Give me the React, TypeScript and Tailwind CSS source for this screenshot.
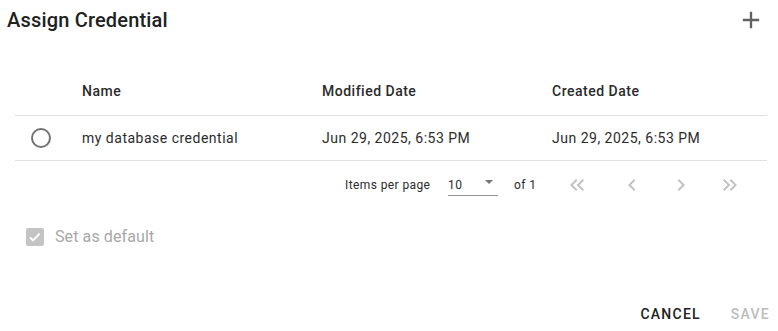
import React from "react";

const rows = [
  {
    name: "my database credential",
    modified: "Jun 29, 2025, 6:53 PM",
    created: "Jun 29, 2025, 6:53 PM",
  },
];

const Icon = ({ d, className }: { d: string; className?: string }) => (
  <svg viewBox="0 0 24 24" className={className} fill="currentColor">
    <path d={d} />
  </svg>
);

const App = () => {
  return (
    <div className="w-[778px] h-[331px] bg-white font-['Roboto',sans-serif] text-[#212121] overflow-hidden">
      {/* title */}
      <div className="flex justify-between items-start h-[67px] pl-[7px] pt-[4px]">
        <h2 className="text-[20px] leading-[32px] font-medium tracking-[0.18px]">Assign Credential</h2>
        <Icon
          d="M19 13h-6v6h-2v-6H5v-2h6V5h2v6h6v2z"
          className="w-[28px] h-[28px] mt-[2px] mr-[13px] text-[#616161]"
        />
      </div>

      {/* table */}
      <div className="ml-[15px] w-[752px]">
        <div className="grid grid-cols-[67px_240px_230px_1fr] items-center h-[49px] border-b border-[#e0e0e0] text-[14px] font-medium tracking-[0.5px] text-[#2b2b2b]">
          <div />
          <div>Name</div>
          <div>Modified Date</div>
          <div>Created Date</div>
        </div>
        {rows.map((r) => (
          <div
            key={r.name}
            className="grid grid-cols-[67px_240px_230px_1fr] items-center h-[45px] border-b border-[#e0e0e0] text-[14px] tracking-[0.5px] text-[#2b2b2b]"
          >
            <div className="pl-[16px]">
              <div className="w-[20px] h-[20px] rounded-full border-2 border-[#737373]" />
            </div>
            <div>{r.name}</div>
            <div>{r.modified}</div>
            <div>{r.created}</div>
          </div>
        ))}

        {/* paginator */}
        <div className="flex items-center h-[48px] text-[12px] tracking-[0.4px] text-[#2b2b2b]">
          <div className="ml-[330px] w-[103px]">Items per page</div>
          <div className="flex items-center w-[50px] h-[21px] border-b border-[#949494]">
            <span>10</span>
            <span className="ml-auto mr-[5px] mb-[6px] w-0 h-0 border-l-[4px] border-r-[4px] border-t-[4px] border-l-transparent border-r-transparent border-t-[#757575]" />
          </div>
          <div className="ml-[16px] w-[51px]">of 1</div>
          <Icon
            d="M17.59 18L19 16.59 14.42 12 19 7.41 17.59 6l-6 6z M11 18l1.41-1.41L7.83 12l4.58-4.59L11 6l-6 6z"
            className="w-[24px] h-[24px] text-[#c2c2c2]"
          />
          <Icon
            d="M15.41 7.41L14 6l-6 6 6 6 1.41-1.41L10.83 12z"
            className="ml-[31px] w-[24px] h-[24px] text-[#c2c2c2]"
          />
          <Icon
            d="M10 6L8.59 7.41 13.17 12l-4.58 4.59L10 18l6-6z"
            className="ml-[25px] w-[24px] h-[24px] text-[#c2c2c2]"
          />
          <Icon
            d="M6.41 6L5 7.41 9.58 12 5 16.59 6.41 18l6-6z M13 6l-1.41 1.41L16.17 12l-4.58 4.59L13 18l6-6z"
            className="ml-[25px] w-[24px] h-[24px] text-[#c2c2c2]"
          />
        </div>
      </div>

      {/* default checkbox */}
      <div className="flex items-center h-[24px] mt-[16px] ml-[26px]">
        <div className="w-[18px] h-[18px] rounded-[2px] bg-[#c4c4c4] flex items-center justify-center">
          <svg viewBox="0 0 24 24" className="w-[16px] h-[16px]" fill="none" stroke="white" strokeWidth="3">
            <path d="M4.5 12.5l4.5 4.5 10-10" />
          </svg>
        </div>
        <span className="ml-[11px] text-[16px] tracking-[0.1px] text-[#a8a8a8]">Set as default</span>
      </div>

      {/* actions */}
      <div className="flex justify-end items-center h-[36px] mt-[47px] pr-[8px] text-[14px] font-medium tracking-[1.25px]">
        <button className="text-[#212121]">CANCEL</button>
        <button className="ml-[30px] text-[#bdbdbd]" disabled>
          SAVE
        </button>
      </div>
    </div>
  );
};

export default App;
